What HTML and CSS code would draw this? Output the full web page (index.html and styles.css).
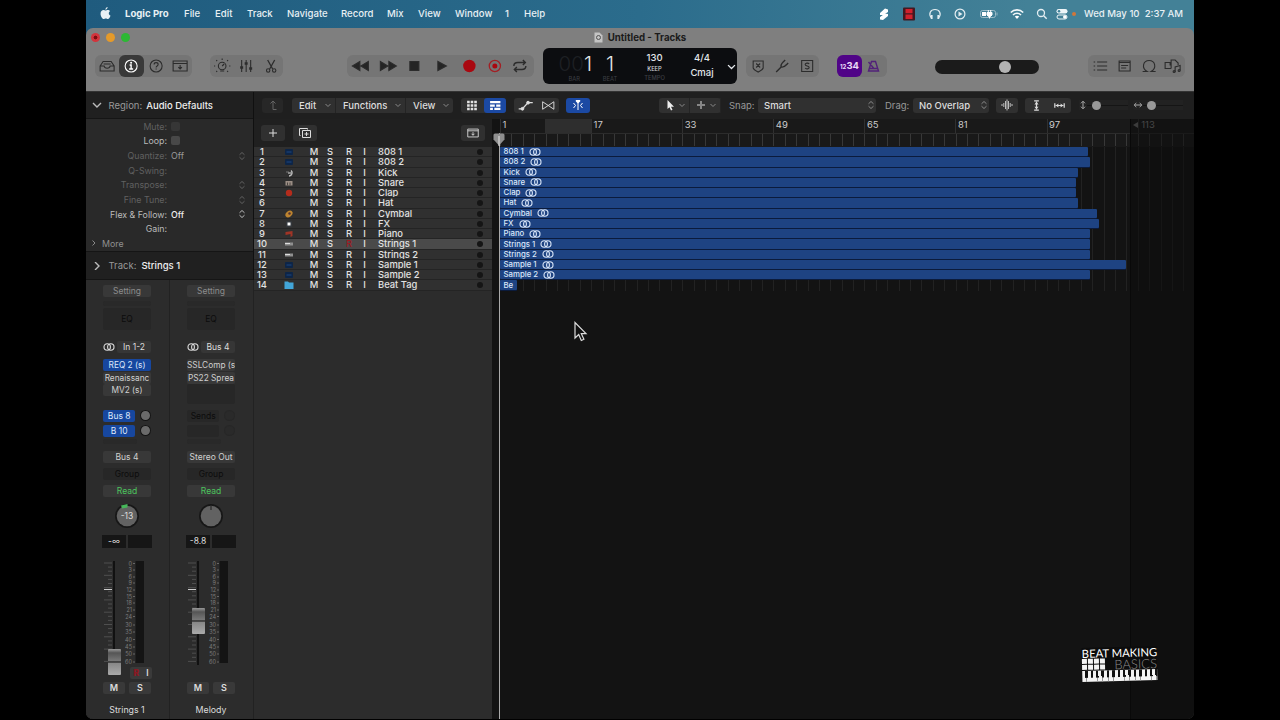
FILE: index.html
```
<!DOCTYPE html>
<html lang="en">
<head>
    <meta charset="UTF-8">
    <meta name="viewport" content="width=device-width, initial-scale=1.0">
    <title>Untitled - Tracks</title>
    <link rel="stylesheet" href="styles.css">
</head>
<body>
    <svg class="sprite">
        <symbol id="stereo" viewBox="0 0 12 8"><g fill="none" stroke="currentColor" stroke-width="1.1"><circle cx="4.2" cy="4" r="3.2"/><circle cx="7.8" cy="4" r="3.2"/></g></symbol>
        <symbol id="down" viewBox="0 0 8 8"><path d="M1.5 3 4 5.5 6.5 3" fill="none" stroke="currentColor"/></symbol>
        <symbol id="updown" viewBox="0 0 8 10"><path d="M1.5 3.8 4 1.5 6.5 3.8M1.5 6.2 4 8.500 6.5 6.2" fill="none" stroke="currentColor"/></symbol>
        <symbol id="span" viewBox="0 0 8 10"><path d="M2 3.300 4 1.200 6 3.300M2 6.700 4 8.800 6 6.700M4 1.500v7" fill="none" stroke="currentColor"/></symbol>
        <symbol id="catch" viewBox="0 0 16 14"><path d="M2 2.500h12v9H2zM2 4.500h12M8 6v3.500M6.200 7.800 8 9.600 9.800 7.800" fill="none" stroke="currentColor"/></symbol>
    </svg>

    <div class="screen">
        <div class="menubar">
            <svg class="apple" viewBox="0 0 12 14"><path d="M8.300 0C8.400 1.500 7.200 2.900 5.900 2.900 5.800 1.500 7 .2 8.300 0zM6.100 3.700c.6 0 1.300-.6 2.400-.6 1 0 2 .5 2.600 1.300-2.200 1.300-1.800 4.300.4 5.100-.6 1.600-1.700 3.500-2.900 3.500-.9 0-1.200-.5-2.300-.5s-1.500.5-2.300.5C2.500 13 .6 9.800.6 7.200.6 4.600 2.200 3.200 3.800 3.200c1 0 1.800.5 2.300.5z" fill="#e8f0f4"/></svg>
            <div class="menus">
                <b>Logic Pro</b><span>File</span><span>Edit</span><span>Track</span><span>Navigate</span><span>Record</span><span>Mix</span><span>View</span><span>Window</span><span>1</span><span>Help</span>
            </div>
            <div class="status">
                <svg viewBox="0 0 14 14"><path d="M3 6 8 1.500 11 2.500 11 5 6 8 3 8zM11 7 11 9 6 13 3 12.500 3 10 8 6.500z" fill="#fff"/></svg>
                <svg viewBox="0 0 14 14"><rect x="1" y=".5" width="12" height="13" rx="1" fill="#421821"/><path d="M3.500 2h7v4.300h-7zM3.500 7.500h7v4.500h-7z" fill="#d0202c"/></svg>
                <svg viewBox="0 0 14 14"><path d="M3.300 11C0 6.500 2.800 2.500 7 2.500s7 4 3.700 8.500" fill="none" stroke="#e4eef2" stroke-width="1.200"/><path d="M3.700 8v4M10.300 8v4" stroke="#e4eef2" stroke-width="1.800"/></svg>
                <svg viewBox="0 0 14 14"><circle cx="7" cy="7" r="4.900" fill="none" stroke="#e4eef2" stroke-width="1.200"/><path d="M5.500 4.500v5L9.500 7z" fill="#e4eef2"/></svg>
                <svg class="battery" viewBox="0 0 20 14"><rect x="1.500" y="3.500" width="15" height="7" rx="2" fill="none" stroke="#9cbcc8"/><path d="M3 5h4v4H3z" fill="#fff"/><path d="M8 5.500h5V8l-1.500 1.500h-2L8 8zM9.300 3v2.500M11.700 3v2.500M10.500 9v2.500" fill="#fff" stroke="#fff"/><path d="M18 5.500v3" stroke="#8fb4c0"/></svg>
                <svg viewBox="0 0 14 14"><path d="M.8 5.500C4.200 2 9.800 2 13.200 5.500M3 8c2.300-2.300 5.700-2.300 8 0" fill="none" stroke="#f2f7f9" stroke-width="1.600"/><path d="M4.800 9.500 7 12 9.200 9.500c-1.300-1-3.100-1-4.400 0z" fill="#fff"/></svg>
                <svg viewBox="0 0 14 14"><circle cx="6" cy="6" r="3.500" fill="none" stroke="#e4eef2" stroke-width="1.300"/><path d="m8.700 8.700 3 3" stroke="#e4eef2" stroke-width="1.400"/></svg>
                <svg viewBox="0 0 14 14"><rect x="1.500" y="2" width="11" height="4.500" rx="2.200" fill="#eef5f8"/><circle cx="4" cy="4.200" r="1.300" fill="#3f8199"/><rect x="2" y="8" width="10" height="4" rx="2" fill="none" stroke="#eef5f8"/><circle cx="9.800" cy="10" r="1.800" fill="#fff"/></svg>
                <i class="mic-dot"></i>
                <span class="clock">Wed May 10&nbsp; 2:37 AM</span>
            </div>
        </div>

        <div class="window">
            <div class="titlebar">
                <div class="lights"><i class="red"></i><i class="amber"></i><i class="green"></i></div>
                <div class="title"><svg viewBox="0 0 9 11"><path d="M.5.500h5l3 3v7h-8z" fill="#c4c4c4"/><circle cx="4.500" cy="5.500" r="2" fill="none" stroke="#555"/></svg>Untitled - Tracks</div>
            </div>
            <div class="toolbar">
                <div class="group views">
                    <svg viewBox="0 0 24 22"><path d="M5 11 8 6.500h8l3 4.500v5H5zM5 11h4c.5 3 5.500 3 6 0h4M8.500 9h7"/></svg>
                    <svg class="active" viewBox="0 0 24 22"><circle cx="12" cy="11" r="6"/><path d="M10.500 10H12v4M10 14h4" stroke-width="1.400"/><circle cx="12" cy="7.800" r=".5"/></svg>
                    <svg viewBox="0 0 24 22"><circle cx="12" cy="11" r="6"/><path d="M10 9.500c0-2.500 4-2.500 4 0 0 1.500-2 1.500-2 3M12 13.500v1"/></svg>
                    <svg viewBox="0 0 24 22"><path d="M5 6h14v10H5zM5 8.500h14M12 10v4M10.200 12.200 12 14l1.800-1.800"/></svg>
                </div>
                <div class="group edits">
                    <svg viewBox="0 0 24 22"><circle cx="12" cy="11" r="3.800"/><path d="M12 3.500v1.500M5 11H3.800M20.200 11H19M7 6l-.9-.9M17 6l.9-.9M7 16l-.9.9M17 16l.9.9M12 11l2-2M10 16h4"/></svg>
                    <svg viewBox="0 0 24 22"><path d="M7.500 5v12M12 5v12M16.500 5v12"/><path d="M6 12.500h3M10.500 8.500h3M15 13.500h3" stroke-width="2.400"/></svg>
                    <svg viewBox="0 0 24 22"><path d="m8.500 5 5 9M15.500 5l-5 9" stroke-width="1.300"/><circle cx="9" cy="15.500" r="1.700"/><circle cx="15" cy="15.500" r="1.700"/></svg>
                </div>
                <div class="group transport">
                    <svg class="solid" viewBox="0 0 26 22"><path d="M12.500 6.500v9L5 11zM21 6.500v9L13.500 11z"/></svg>
                    <svg class="solid" viewBox="0 0 26 22"><path d="M6 6.500v9l7.500-4.500zM14.500 6.500v9L22 11z"/></svg>
                    <svg class="solid" viewBox="0 0 26 22"><path d="M9.500 6.500h9v9h-9z"/></svg>
                    <svg class="solid" viewBox="0 0 26 22"><path d="M10.500 6.500v9L19 11z"/></svg>
                    <svg viewBox="0 0 26 22"><circle cx="15" cy="11" r="6.200" fill="#a90810" stroke="none"/></svg>
                    <svg viewBox="0 0 26 22"><circle cx="13.500" cy="11" r="5.600" stroke="#a31f24" stroke-width="1.300"/><circle cx="13.500" cy="11" r="2.500" fill="#a90810" stroke="none"/></svg>
                    <svg viewBox="0 0 26 22"><path d="M6.500 11c0-3 1.500-3.500 4-3.500h7M15.500 5 18 7.500 15.500 10M18.500 11c0 3-1.500 3.500-4 3.500h-7M9.500 12 7 14.500 9.500 17" stroke-width="1.400"/></svg>
                </div>
                <div class="lcd">
                    <div class="bar"><strong><em>00</em>1</strong><small>BAR</small></div>
                    <div class="beat"><strong>1</strong><small>BEAT</small></div>
                    <div class="tempo"><span>130</span><small class="keep">KEEP</small><small>TEMPO</small></div>
                    <div class="sign"><span>4/4</span><span>Cmaj</span></div>
                    <svg viewBox="0 0 8 8"><use href="#down"/></svg>
                </div>
                <div class="group modes">
                    <svg viewBox="0 0 24 22"><path d="M7 6h10v7c-1 3-4 3-5 4-1-1-4-1-5-4zM10 8.500l4 4M14 8.500l-4 4"/></svg>
                    <svg viewBox="0 0 24 22"><path d="m6 17 5-5M11 12c-1-3 1-4 4-7M11 12c3 1 4-1 7-4" stroke-width="1.400"/></svg>
                    <svg viewBox="0 0 24 22"><path d="M6.500 5.500h11v11h-11zM14 9c-1-1.500-4-1-4 .5 0 2 4 1 4 3 0 1.500-3 2-4 .5"/></svg>
                </div>
                <div class="group count">
                    <div class="count-in"><small>12</small>34</div>
                    <svg viewBox="0 0 24 22"><path d="M6 16 9 6.500h4L16 16zM7 13.500h8M11 13 6 7" stroke="#522279" stroke-width="1.400"/></svg>
                </div>
                <div class="volume"><i></i></div>
                <div class="group lists">
                    <svg viewBox="0 0 24 22"><path d="M9 7h10M9 11h10M9 15h10M5.500 7h1.500M5.500 11h1.500M5.500 15h1.500"/></svg>
                    <svg viewBox="0 0 24 22"><path d="M7 6h11v10H7zM7 7.500h11M9 10.500h7M9 13h5"/></svg>
                    <svg viewBox="0 0 24 22"><path d="M5.500 16.500h4.500C4 13 6 5.500 12 5.500S20 13 14 16.500h4.500"/></svg>
                    <svg viewBox="0 0 24 22"><path d="M10 13.500H4v-6h5v3M10 13.500V5h4l3 3v2M14 17v-5l5-1.500v5"/><circle cx="13" cy="16.500" r="1"/><circle cx="18" cy="15.500" r="1"/></svg>
                </div>
            </div>

            <div class="content">
                <aside class="inspector">
                    <div class="heading"><svg viewBox="0 0 10 8"><path d="m1 2 4 4 4-4"/></svg><span>Region:</span><b>Audio Defaults</b></div>
                    <div class="params">
                        <div class="param off"><label>Mute:</label><i></i></div>
                        <div class="param"><label>Loop:</label><i></i></div>
                        <div class="param off"><label>Quantize:</label><span>Off</span><svg><use href="#updown"/></svg></div>
                        <div class="param off"><label>Q-Swing:</label></div>
                        <div class="param off"><label>Transpose:</label><svg><use href="#updown"/></svg></div>
                        <div class="param off"><label>Fine Tune:</label><svg><use href="#updown"/></svg></div>
                        <div class="param"><label>Flex &amp; Follow:</label><b>Off</b><svg><use href="#updown"/></svg></div>
                        <div class="param"><label>Gain:</label></div>
                        <div class="more"><svg viewBox="0 0 6 8"><path d="m1.500 1.500 2.500 2.500-2.500 2.500"/></svg>More</div>
                    </div>
                    <div class="heading track-heading"><svg viewBox="0 0 10 8"><path d="m3 0 4 4-4 4"/></svg><span>Track:</span><b>Strings 1</b></div>
                    <div class="strips">
                        <div class="strip">
                            <div class="slot">Setting</div>
                            <div class="slot empty thin"></div>
                            <div class="slot empty eq">EQ</div>
                            <div class="input"><svg><use href="#stereo"/></svg><span>In 1-2</span></div>
                            <div class="inserts"><div class="slot blue">REQ 2 (s)</div><div class="slot">Renaissanc</div><div class="slot">MV2 (s)</div></div>
                            <div class="sends">
                                <div><span class="slot blue">Bus 8</span><i></i></div>
                                <div><span class="slot blue">B 10</span><i></i></div>
                                <div><span class="slot empty thin"></span></div>
                            </div>
                            <div class="slot">Bus 4</div>
                            <div class="slot empty grp">Group</div>
                            <div class="slot read">Read</div>
                            <svg class="knob" viewBox="0 0 26 26"><circle cx="13" cy="13" r="12" fill="#171717"/><circle cx="13" cy="13" r="10.300" fill="#626262"/><path d="M7 2.500 13.500 1v3.500L8 5.500z" fill="#46b65a"/><text x="13" y="16">-13</text></svg>
                            <div class="levels"><span>-∞</span><span></span></div>
                            <div class="fader" data-cap="88" data-record="1"></div>
                            <div class="ms"><span>M</span><span>S</span></div>
                            <div class="name">Strings 1</div>
                        </div>
                        <div class="strip">
                            <div class="slot">Setting</div>
                            <div class="slot empty thin"></div>
                            <div class="slot empty eq">EQ</div>
                            <div class="input"><svg><use href="#stereo"/></svg><span>Bus 4</span></div>
                            <div class="inserts"><div class="slot">SSLComp (s</div><div class="slot">PS22 Sprea</div><div class="slot empty tall"></div></div>
                            <div class="sends none">
                                <div><span class="slot empty">Sends</span><i></i></div>
                                <div><span class="slot empty"></span><i></i></div>
                                <div><span class="slot empty thin"></span></div>
                            </div>
                            <div class="slot">Stereo Out</div>
                            <div class="slot empty grp">Group</div>
                            <div class="slot read">Read</div>
                            <svg class="knob" viewBox="0 0 26 26"><circle cx="13" cy="13" r="12" fill="#171717"/><circle cx="13" cy="13" r="10.300" fill="#626262"/><path d="M13 3v4" stroke="#1c1c1c"/></svg>
                            <div class="levels"><span>-8.8</span><span></span></div>
                            <div class="fader" data-cap="47"></div>
                            <div class="ms"><span>M</span><span>S</span></div>
                            <div class="name">Melody</div>
                        </div>
                    </div>
                </aside>

                <main class="tracks">
                    <div class="tracks-bar">
                        <div class="btn up"><svg viewBox="0 0 12 12"><path d="M9.500 10.500H6V2M3.500 4.500 6 2l2.500 2.500"/></svg></div>
                        <div class="btn menu-set"><span>Edit<svg><use href="#down"/></svg></span><span>Functions<svg><use href="#down"/></svg></span><span>View<svg><use href="#down"/></svg></span></div>
                        <div class="btn pair display">
                            <svg viewBox="0 0 22 16"><path d="M5.500 3h2.800v2.700H5.500zM9.300 3h2.800v2.700H9.300zM13.100 3h2.800v2.700h-2.800zM5.500 6.700h2.800v2.700H5.500zM9.300 6.700h2.800v2.700H9.300zM13.100 6.700h2.800v2.700h-2.800zM5.500 10.400h2.800v2.700H5.500zM9.300 10.400h2.800v2.700H9.300zM13.100 10.400h2.800v2.700h-2.800z" fill="#e2e2e2" stroke="none"/></svg>
                            <svg class="on" viewBox="0 0 22 16"><path d="M5.500 4.500h11M5.500 8h5M12 8h4.500M5.500 11.500h3M10 11.500h6.500" stroke-width="2.400"/></svg>
                        </div>
                        <div class="btn pair auto">
                            <svg viewBox="0 0 22 16"><path d="M4 11.500h4L14 5h5" stroke-width="1.300"/><circle cx="8" cy="11.500" r="1.500" fill="#ddd"/><circle cx="14" cy="5" r="1.500" fill="#ddd"/></svg>
                            <svg viewBox="0 0 22 16"><path d="M5 4v8l12-8v8L5 4z"/></svg>
                        </div>
                        <div class="btn on catch"><svg viewBox="0 0 24 16"><path d="M12 5v8M7.500 6 9.500 8.500l-2 2.500M16.500 6l-2 2.500 2 2.500"/><path d="M9.800 3h4.400v1.500L12 6.500 9.800 4.500z" fill="#fff" stroke="none"/></svg></div>
                        <div class="btn tools">
                            <span><svg viewBox="0 0 12 12"><path d="M3.500 1v9l2-1.700 1.500 3.200 1.500-.8L7 7.700h3z" fill="#eee" stroke="none"/></svg><svg class="chev"><use href="#down"/></svg></span>
                            <span><svg viewBox="0 0 12 12"><path d="M6 2v3M6 7v3M2 6h3M7 6h3M5 6h2"/></svg><svg class="chev"><use href="#down"/></svg></span>
                        </div>
                        <span class="caption">Snap:</span>
                        <div class="btn select snap">Smart<svg><use href="#updown"/></svg></div>
                        <span class="caption drag">Drag:</span>
                        <div class="btn select no-overlap">No Overlap<svg><use href="#updown"/></svg></div>
                        <div class="btn wave"><svg viewBox="0 0 12 12"><path d="M1 5v2M2.800 4v4M4.500 2v8M6 .5v11M7.500 2v8M9.200 4v4M11 5v2"/></svg></div>
                        <div class="btn pair zooms">
                            <svg viewBox="0 0 22 16"><path d="M8.500 3h5M8.500 13h5M11 4v8" stroke-width="1.300"/><path d="M8.800 6.800 11 4l2.200 2.800zM8.800 9.200 11 12l2.200-2.800z" fill="#ddd" stroke="none"/></svg>
                            <svg viewBox="0 0 22 16"><path d="M6 5.500v5M16 5.500v5M7 8h8" stroke-width="1.300"/><path d="M9.800 5.800 7 8l2.800 2.200zM12.200 5.800 15 8l-2.800 2.200z" fill="#ddd" stroke="none"/></svg>
                        </div>
                        <div class="zoomer"><svg><use href="#span"/></svg><i></i></div>
                        <div class="zoomer horizontal"><svg><use href="#span"/></svg><i></i></div>
                    </div>

                    <div class="panes">
                        <section class="list">
                            <div class="list-bar">
                                <div class="btn"><svg viewBox="0 0 14 14"><path d="M7 3v8M3 7h8"/></svg></div>
                                <div class="btn"><svg viewBox="0 0 14 14"><path d="M4.500 4.500h8v7h-8zM2.500 9.500h-1v-7h8v1M8.500 6v4M6.500 8h4"/></svg></div>
                                <div class="btn last"><svg viewBox="0 0 16 14"><use href="#catch"/></svg></div>
                            </div>
                            <div id="headers"></div>
                        </section>
                        <section class="arrange">
                            <div id="ruler"></div>
                            <div id="regions"></div>
                            <div class="after-end"></div>
                            <div class="playhead"><svg viewBox="0 0 12 13"><path d="M.5 2q0-1.500 1.500-1.500h8q1.500 0 1.500 1.500v4.500L6 12.500.5 6.500z" fill="#8f8f8f"/><path d="M6 3v10" stroke="#e5e5e5"/></svg></div>
                            <svg class="pointer" viewBox="0 0 14 21"><path d="M1 1.500v15.500l3.700-3.500 2.600 6 2.600-1.200-2.600-5.600H12z" fill="#111" stroke="#ddd" stroke-width="1.200"/></svg>
                            <div class="logo">
                                <div class="beat-making">BEAT MAKING</div>
                                <div class="mid"><div class="pads"><i></i><i></i><i></i><i></i><i></i><i></i><i></i><i></i></div><span>BASICS</span></div>
                                <div class="keys"></div>
                            </div>
                        </section>
                    </div>
                </main>
            </div>
        </div>
    </div>

    <script>
        // name, region length in px, icon
        const tracks = [
            ['808 1', 588, 'wave'], ['808 2', 590, 'wave'], ['Kick', 578, 'kick'],
            ['Snare', 576, 'snare'], ['Clap', 576, 'clap'], ['Hat', 578, ''],
            ['Cymbal', 597, 'cymbal'], ['FX', 599, 'fx'], ['Piano', 590, 'piano'],
            ['Strings 1', 590, 'strings'], ['Strings 2', 590, 'strings'],
            ['Sample 1', 626, 'wave'], ['Sample 2', 590, 'wave'], ['Beat Tag', 17, 'folder']
        ];
        const icons = {
            wave: '<rect x="1" y="2" width="8" height="6" rx="1" fill="#0d2547"/><path d="M2.500 5h5" stroke="#1d4782"/>',
            kick: '<path d="M2 4h3" stroke="#777"/><path d="M5 8c3 0 4-4 2-5.500" stroke="#bbb" stroke-width="1.500"/><path d="M4 4h3v2H4z" fill="#888"/>',
            snare: '<rect x="1.500" y="3" width="7" height="4.500" fill="#9a8d84"/><path d="M3.500 4.500v3M6 4.500v3" stroke="#4a4440"/>',
            clap: '<circle cx="5" cy="5" r="3.200" fill="#b52c1c"/>',
            cymbal: '<ellipse cx="5" cy="5" rx="4" ry="2.800" transform="rotate(-40 5 5)" fill="#bd842f"/><circle cx="5.500" cy="4.500" r="1.200" fill="#533"/>',
            fx: '<rect x="2" y="2" width="6" height="6" rx="1" fill="#34383d"/><rect x="3.500" y="3.500" width="3" height="3" fill="#fff"/>',
            piano: '<path d="M1.500 3 8.500 2v5l-2 1V5l-5 1z" fill="#a03426"/>',
            strings: '<path d="M1 3.500h8v3H1z" fill="#8f8f8f"/><path d="M1 4.500h5" stroke="#ddd"/>',
            folder: '<path d="M.5 1.500h3.500l1 1h4.500v6.500h-9z" fill="#42a5d8"/>'
        };

        const headers = document.getElementById('headers');
        const regions = document.getElementById('regions');
        tracks.forEach(([name, width, icon], i) => {
            const selected = name === 'Strings 1' ? ' selected' : '';
            headers.innerHTML += `<div class="row${selected}"><span class="num">${i + 1}</span>
                <svg viewBox="0 0 10 10">${icons[icon] || ''}</svg>
                <span class="key">M</span><span class="key">S</span><span class="key rec">R</span><span class="key">I</span>
                <span class="label">${name}</span><i></i></div>`;
            const text = name === 'Beat Tag' ? 'Be' : name + '<svg><use href="#stereo"/></svg>';
            regions.innerHTML += `<div class="lane"><div class="region" style="width:${width}px">${text}</div></div>`;
        });

        const ruler = document.getElementById('ruler');
        for (let bar = 1; bar <= 113; bar += 16) {
            ruler.innerHTML += `<div class="mark"><span>${bar}</span></div>`;
        }

        const scale = [[0, 2.5], [3, 9], [6, 16], [9, 22], [12, 29], [15, 35.5], [18, 42], [21, 49], [24, 55.5],
            [30, 64], [35, 71], [40, 78.5], [45, 86], [50, 93], [60, 101]];
        document.querySelectorAll('.fader').forEach((fader) => {
            const cap = Number(fader.dataset.cap);
            let marks = '';
            scale.forEach(([db, y]) => {
                marks += `<text x="29" y="${y + 2}">${db}</text><path d="M30 ${y}h2" stroke="#666"/>`;
            });
            for (let n = 0; n < 25; n++) {
                const y = 2 + n * 4.1;
                marks += `<path d="M${n % 3 ? 5 : 1} ${y}H9" stroke="#585858" stroke-width=".8"/>`;
            }
            fader.innerHTML = `<svg viewBox="0 0 49 116"><defs><linearGradient id="cap${cap}" x2="0" y2="1">
                <stop offset="0" stop-color="#999"/><stop offset=".15" stop-color="#555"/><stop offset=".45" stop-color="#777"/>
                <stop offset=".5" stop-color="#222"/><stop offset=".55" stop-color="#888"/><stop offset="1" stop-color="#aaa"/></linearGradient></defs>
                ${marks}<path d="M1 28.500h8" stroke="#ccc"/><path d="M11 0v104" stroke="#111" stroke-width="2"/>
                <path d="M32.500 0H41v102H32.500z" fill="#141414"/>
                <rect x="5" y="${cap}" width="13" height="26" rx="1" fill="url(#cap${cap})"/></svg>
                ${fader.dataset.record ? '<div class="ri"><b>R</b><span>I</span></div>' : ''}`;
        });
    </script>
</body>
</html>
```
FILE: styles.css
```
* {
    box-sizing: border-box;
}

body {
    margin: 0;
    height: 720px;
    overflow: hidden;
    background: #000;
    color: #ddd;
    font-family: Inter, "Liberation Sans", sans-serif;
    font-size: 9.5px;
}

i, em {
    font-style: normal;
}

svg {
    display: block;
    flex: none;
    fill: none;
}

.sprite {
    position: absolute;
    width: 0;
    height: 0;
}

.screen {
    width: 1108px;
    height: 720px;
    margin-left: 86px;
    background: linear-gradient(90deg, #1f5b7e, #2b6c8c 50%, #438197 85%, #438197) 0 0 / 100% 40px no-repeat;
}

/* menu bar */
.menubar {
    display: flex;
    align-items: center;
    height: 28px;
    padding: 0 12px 1px 14px;
    color: #e8f0f4;
    font-size: 9.6px;
    font-weight: 500;
}

.apple {
    width: 11px;
    height: 13px;
    margin-right: 14px;
}

.menus {
    display: grid;
    grid-template-columns: 59px 31px 32px 40px 54px 46px 31px 37px 50px 19px 30px;
    white-space: nowrap;
}

.menus b {
    font-weight: 700;
}

.status {
    display: flex;
    align-items: center;
    margin-left: auto;
}

.status svg {
    width: 14px;
    height: 14px;
    margin-right: 11.5px;
}

.status .battery {
    width: 20px;
    margin-right: 11px;
}

.status svg:nth-of-type(7) {
    margin-right: 6px;
}

.status svg:nth-of-type(8) {
    margin-right: 3px;
}

.mic-dot {
    width: 4px;
    height: 4px;
    border-radius: 50%;
    background: #d0763a;
}

.clock {
    width: 98px;
    margin-left: 8px;
    white-space: nowrap;
}

/* window */
.window {
    height: 691px;
    border-radius: 7px;
    overflow: hidden;
    background: #7f7f7f;
}

.titlebar {
    height: 20px;
    color: #1b1b1b;
}

.lights {
    display: flex;
    gap: 6px;
    padding: 5px 0 0 5px;
}

.lights i {
    width: 9px;
    height: 9px;
    border-radius: 50%;
}

.red {
    background: radial-gradient(#7c0c10 25%, #d2343c 35%);
}

.amber {
    background: #e59a2a;
}

.green {
    background: #2cb834;
}

.title {
    display: flex;
    justify-content: center;
    align-items: center;
    gap: 5px;
    margin-top: -12px;
    height: 14px;
    font-size: 9.7px;
    font-weight: 700;
}

.title svg {
    width: 9px;
    height: 11px;
}

.toolbar {
    display: flex;
    height: 43px;
    padding: 7px 0 0 9px;
    color: #222;
}

.group {
    display: flex;
    height: 22px;
    border-radius: 6px;
    background: #757575;
}

.group svg {
    flex: 1;
    min-width: 0;
    height: 22px;
    stroke: #2c2c2c;
    stroke-width: 1.1;
}

.group .solid {
    fill: #252525;
}

.group .active {
    border-radius: 6px;
    background: #393939;
    stroke: #fff;
}

.views {
    width: 97px;
    margin-right: 18px;
}

.edits {
    width: 73px;
    margin-right: 64px;
}

.transport {
    width: 187px;
    margin-right: 9px;
}

.modes {
    width: 73px;
    margin: 0 18px 0 9px;
}

.count {
    width: 50px;
}

.count-in {
    width: 25px;
    border-radius: 6px;
    background: #500487;
    color: #e9d9f5;
    font-size: 9.5px;
    font-weight: 700;
    line-height: 22px;
    text-align: center;
}

.count-in small {
    font-size: 6px;
}

.volume {
    width: 104px;
    height: 14px;
    margin: 5px 49px 0 48px;
    padding: 1px 0 0 64px;
    border-radius: 7px;
    background: #1b1b1b;
}

.volume i {
    display: block;
    width: 12px;
    height: 12px;
    border-radius: 50%;
    background: #b3b3b3;
}

.lists {
    width: 97px;
}

.lcd {
    display: flex;
    width: 194px;
    height: 36px;
    margin-top: -7px;
    border-radius: 6px;
    background: #0c0d10;
    color: #e3e6ea;
    text-align: center;
}

.lcd small {
    display: block;
    color: #3c3f44;
    font-size: 5.8px;
    line-height: 8px;
}

.lcd strong {
    display: block;
    height: 27px;
    font-size: 20.5px;
    font-weight: 300;
    line-height: 32px;
}

.lcd em {
    color: #1e2024;
}

.lcd .bar {
    width: 49px;
    text-align: right;
}

.lcd .bar small {
    padding-right: 12px;
}

.lcd .beat {
    width: 36px;
}

.tempo {
    width: 53px;
    padding-top: 4px;
    font-weight: 500;
}

.tempo span, .sign span {
    display: block;
    height: 13px;
}

.tempo .keep {
    height: 9px;
    color: #cfd2d6;
}

.sign {
    width: 42px;
    padding-top: 4px;
    font-weight: 500;
}

.sign span {
    height: 15px;
}

.lcd > svg {
    width: 11px;
    height: 11px;
    margin: 13px 0 0 3px;
}

.content {
    display: flex;
    height: 628px;
    border-top: 1px solid #343434;
    background: #101010;
}

/* inspector */
.inspector {
    width: 167px;
    margin-right: 1px;
    background: #2c2c2c;
}

.heading {
    display: flex;
    align-items: center;
    height: 27px;
    padding-left: 5.5px;
    background: #202020;
    border-bottom: 1px solid #151515;
}

.heading svg {
    width: 10px;
    height: 8px;
    stroke: #bbb;
    stroke-width: 1.4;
    margin-right: 7px;
}

.heading span {
    color: #999;
    margin-right: 4px;
}

.heading b {
    color: #eee;
    font-weight: 500;
}

.track-heading {
    height: 29px;
    border-top: 1px solid #151515;
}

.track-heading span {
    margin-right: 5px;
}

.params {
    height: 132px;
    background: #292929;
    font-size: 8.8px;
}

.param {
    display: flex;
    align-items: center;
    height: 14.65px;
    color: #bbb;
}

.param label {
    width: 81px;
    margin-right: 4px;
    text-align: right;
}

.param i {
    width: 9px;
    height: 9px;
    border-radius: 2px;
    background: #484848;
}

.param b {
    color: #eee;
    font-weight: 500;
}

.param svg {
    width: 8px;
    height: 10px;
    margin: 0 7px 0 auto;
}

.off {
    color: #606060;
}

.off i {
    background: #363636;
}

.off span {
    color: #999;
}

.more {
    display: flex;
    align-items: center;
    gap: 5px;
    padding-left: 5px;
    height: 14px;
    color: #909090;
}

.more svg {
    width: 6px;
    height: 8px;
    stroke: #888;
}

.strips {
    display: flex;
    height: 439px;
}

.strip {
    width: 84px;
    padding: 5px 18px 0 17px;
    border-right: 1px solid #222;
}

.slot {
    height: 12px;
    border-radius: 2px;
    background: #383838;
    color: #d0d0d0;
    font-size: 8.5px;
    line-height: 12px;
    text-align: center;
    white-space: nowrap;
    overflow: hidden;
}

.strip > .slot:first-child {
    color: #8c8c8c;
}

.strip .empty {
    background: #272727;
    color: #0c0c0c;
}

.strip .thin {
    height: 5px;
    margin-top: 4px;
    background: #292929;
}

.strip .eq {
    height: 22px;
    margin: 2px 0 11px;
    line-height: 22px;
}

.strip .tall {
    height: 20px;
}

.input {
    display: flex;
    justify-content: space-between;
    align-items: center;
    height: 12px;
    margin-bottom: 6px;
    font-size: 8.5px;
}

.input svg {
    width: 12px;
    height: 8px;
}

.input span {
    width: 34px;
    height: 12px;
    border-radius: 2px;
    background: #363636;
    line-height: 12px;
    text-align: center;
}

.inserts {
    height: 51px;
}

.inserts .slot {
    margin-bottom: .5px;
    font-size: 8.3px;
}

.strip .blue {
    background: #17479f;
    color: #dce6fa;
}

.sends {
    height: 41px;
}

.sends div {
    display: flex;
    gap: 5px;
    height: 14.5px;
}

.sends .slot {
    width: 34px;
}

.sends .thin {
    margin-top: 0;
}

.sends i {
    width: 11px;
    height: 11px;
    border: 1.5px solid #141414;
    border-radius: 50%;
    background: #6a6a6a;
}

.sends.none i {
    border-color: #272727;
    background: #2a2a2a;
}

.strip .grp {
    margin: 5px 0;
}

.strip .read {
    color: #4cc45d;
}

.knob {
    width: 26px;
    height: 26px;
    margin: 6px 0 6px 11px;
}

.knob text {
    fill: #ddd;
    font-size: 8.5px;
    text-anchor: middle;
}

.levels {
    display: flex;
    gap: 2px;
    margin: 0 -1px 13px;
    font-size: 8.5px;
}

.levels span {
    width: 25px;
    height: 13px;
    background: #161616;
    line-height: 13px;
    text-align: center;
}

.fader {
    display: grid;
    height: 121px;
}

.fader > * {
    grid-area: 1 / 1;
}

.fader > svg {
    width: 49px;
    height: 116px;
}

.fader text {
    fill: #7c7c7c;
    font-size: 5.5px;
    text-anchor: end;
}

.ri {
    display: flex;
    justify-content: space-around;
    align-self: end;
    justify-self: end;
    width: 22px;
    height: 12px;
    margin-bottom: 3px;
    background: #3a3a3a;
    border-radius: 2px;
    font-size: 8.5px;
    font-weight: 600;
    line-height: 12px;
}

.ri b {
    color: #8a1822;
}

.ms {
    display: flex;
    gap: 4px;
    font-size: 9px;
    font-weight: 600;
}

.ms span {
    width: 22px;
    height: 12px;
    border-radius: 2px;
    background: #393939;
    line-height: 12px;
    text-align: center;
}

.name {
    margin: 10px -15px 0;
    font-size: 8.8px;
    line-height: 12px;
    text-align: center;
}

/* tracks area */
.tracks {
    width: 940px;
    background: #1f1f1f;
}

.tracks-bar {
    display: flex;
    align-items: center;
    height: 27px;
    padding: 0 0 1px 8px;
    white-space: nowrap;
}

.btn {
    display: flex;
    align-items: center;
    height: 15px;
    border-radius: 3px;
    background: #303030;
}

.btn svg {
    stroke: #ddd;
    color: #ddd;
}

.tracks .on {
    background: #1b49a3;
    border-radius: 3px;
    stroke: #fff;
}

.up {
    width: 21px;
    margin-right: 9px;
    justify-content: center;
    background: #272727;
}

.up svg {
    width: 12px;
    height: 12px;
    stroke: #656565;
}

.menu-set {
    width: 161px;
    margin-right: 8px;
}

.menu-set span {
    display: flex;
    align-items: center;
    justify-content: space-between;
    width: 44px;
    padding: 0 3px 0 7px;
    height: 15px;
    border-right: 1px solid #242424;
    font-weight: 500;
}

.menu-set span:nth-child(2) {
    width: 70px;
}

.menu-set span:nth-child(3) {
    width: 47px;
    border: 0;
}

.menu-set svg, .chev {
    width: 8px;
    height: 8px;
}

.menu-set use, .chev use {
    color: #888;
}

.pair {
    width: 45px;
    margin-right: 8px;
}

.auto {
    margin-right: 7px;
}

.pair svg {
    width: 50%;
    height: 15px;
}

.catch {
    width: 24px;
    margin-right: 69px;
}

.catch svg {
    width: 24px;
    height: 16px;
    stroke: #fff;
}

.tools span {
    display: flex;
    align-items: center;
    justify-content: space-between;
    width: 31px;
    height: 15px;
    padding: 0 3px 0 5px;
    border-right: 1px solid #242424;
}

.tools span > svg:first-child {
    width: 12px;
    height: 12px;
}

.caption {
    width: 29px;
    margin-left: 8px;
    color: #999;
}

.select {
    justify-content: space-between;
    width: 118px;
    padding: 0 1px 0 6px;
    font-weight: 500;
}

.btn.select svg {
    width: 8px;
    height: 10px;
    color: #888;
}

.no-overlap {
    width: 76px;
    margin-right: 7px;
}

.caption.drag {
    width: 28px;
    margin-left: 9px;
}

.wave {
    justify-content: center;
    width: 22px;
    margin-right: 7px;
}

.wave svg {
    width: 12px;
    height: 12px;
    stroke: #bbb;
}

.zooms {
    width: 46px;
}

.zoomer {
    display: flex;
    align-items: center;
    gap: 5px;
    width: 49px;
    margin-right: 6px;
    background: linear-gradient(#151515, #151515) center / 100% 1px no-repeat #222;
    color: #aaa;
}

.zoomer svg {
    width: 8px;
    height: 10px;
    background: #222;
}

.horizontal svg {
    transform: rotate(90deg);
}

.zoomer i {
    width: 9px;
    height: 9px;
    border-radius: 50%;
    background: #999;
}

.panes {
    display: flex;
    height: 600px;
}

.list {
    width: 238px;
    background: #2c2c2c;
}

.list-bar {
    display: flex;
    gap: 8px;
    height: 28px;
    padding: 6px 7px 0 7px;
    background: #202020;
}

.list-bar .btn {
    justify-content: center;
    width: 24px;
    height: 16px;
}

.list-bar svg {
    width: 14px;
    height: 14px;
}

.list-bar .last {
    margin-left: auto;
}

.row {
    display: grid;
    grid-template-columns: 16px 36px 16px 16px 22px 9px 105px 12px;
    align-items: center;
    height: 10.27px;
    border-bottom: 1px solid #242424;
    background: #303030;
    color: #e2e2e2;
    font-size: 9.4px;
    font-weight: 500;
    line-height: 10px;
    overflow: hidden;
    white-space: nowrap;
}

.row .num {
    text-align: center;
}

.row svg {
    width: 10px;
    height: 10px;
    margin-left: 14px;
}

.row .key {
    text-align: center;
}

.row .label {
    padding-left: 9px;
}

.row i {
    width: 6px;
    height: 6px;
    margin-left: 3px;
    border-radius: 50%;
    background: #151515;
}

.selected {
    background: #4a4a4a;
}

.selected .rec {
    color: #9c1c22;
}

.arrange {
    position: relative;
    flex: 1;
    padding-left: 8px;
    background: #131313;
    overflow: hidden;
}

#ruler {
    display: flex;
    height: 28px;
    background:
        linear-gradient(#2e2e2e, #2e2e2e) 45px 0 / 46px 14px no-repeat,
        linear-gradient(#2c2c2c, #2c2c2c) 0 14px / 100% 1px no-repeat,
        repeating-linear-gradient(90deg, #383838 0 1px, transparent 1px 11.39px) 0 15px / 100% 12px no-repeat,
        #191919;
}

.mark {
    flex: none;
    width: 91.1px;
    height: 14px;
    padding-left: 1.5px;
    border-left: 1px solid #303030;
    color: #ccc;
    font-size: 9.5px;
    line-height: 12px;
}

.mark:last-child {
    color: #8c8c8c;
}

.mark:last-child::before {
    content: "";
    float: left;
    margin: 3px 3px 0 -7px;
    border: 3px solid transparent;
    border-right: 5px solid #777;
    border-left: 0;
}

.lane {
    height: 10.27px;
    background: repeating-linear-gradient(90deg, #222 0 1px, transparent 1px 11.39px);
}

.region {
    display: flex;
    align-items: center;
    gap: 5px;
    height: 9.3px;
    padding-left: 3.5px;
    border-radius: 1px;
    background: #1e4382;
    box-shadow: 0 1px #0b1b3c;
    color: #dce8fa;
    font-size: 7.8px;
    font-weight: 500;
    line-height: 9px;
    white-space: nowrap;
}

.region svg {
    width: 12px;
    height: 8px;
}

.after-end {
    position: absolute;
    inset: 0 0 0 638px;
    background: rgba(12, 12, 12, .55);
    border-left: 1px solid #090909;
}

.playhead {
    position: absolute;
    top: 14px;
    bottom: 0;
    left: 1px;
    width: 12px;
    background: linear-gradient(#aaa, #aaa) center / 1px 100% no-repeat;
}

.playhead svg {
    width: 12px;
    height: 13px;
}

.pointer {
    position: absolute;
    left: 82px;
    top: 202px;
    width: 14px;
    height: 21px;
}

.logo {
    position: absolute;
    left: 590px;
    top: 528px;
    width: 75px;
    background: #0c0c0c;
    color: #fff;
    font-family: Lato, sans-serif;
    transform: rotate(-1.5deg);
}

.beat-making {
    font-size: 11.3px;
    line-height: 11px;
    white-space: nowrap;
}

.mid {
    display: flex;
    justify-content: space-between;
    height: 12px;
}

.pads {
    display: grid;
    grid-template-columns: repeat(4, 5px);
    grid-auto-rows: 5px;
    gap: 1px;
}

.pads i {
    background: #f4f4f4;
}

.mid span {
    color: #888;
    font-size: 13px;
    font-weight: 300;
    line-height: 12px;
}

.keys {
    height: 11px;
    background:
        repeating-linear-gradient(90deg, transparent 0 3px, #111 3px 5.400px) 0 0 / 100% 7px no-repeat,
        repeating-linear-gradient(90deg, transparent 0 3.800px, #999 3.800px 4.600px, transparent 4.600px 5.400px),
        #f4f4f4;
}
```
